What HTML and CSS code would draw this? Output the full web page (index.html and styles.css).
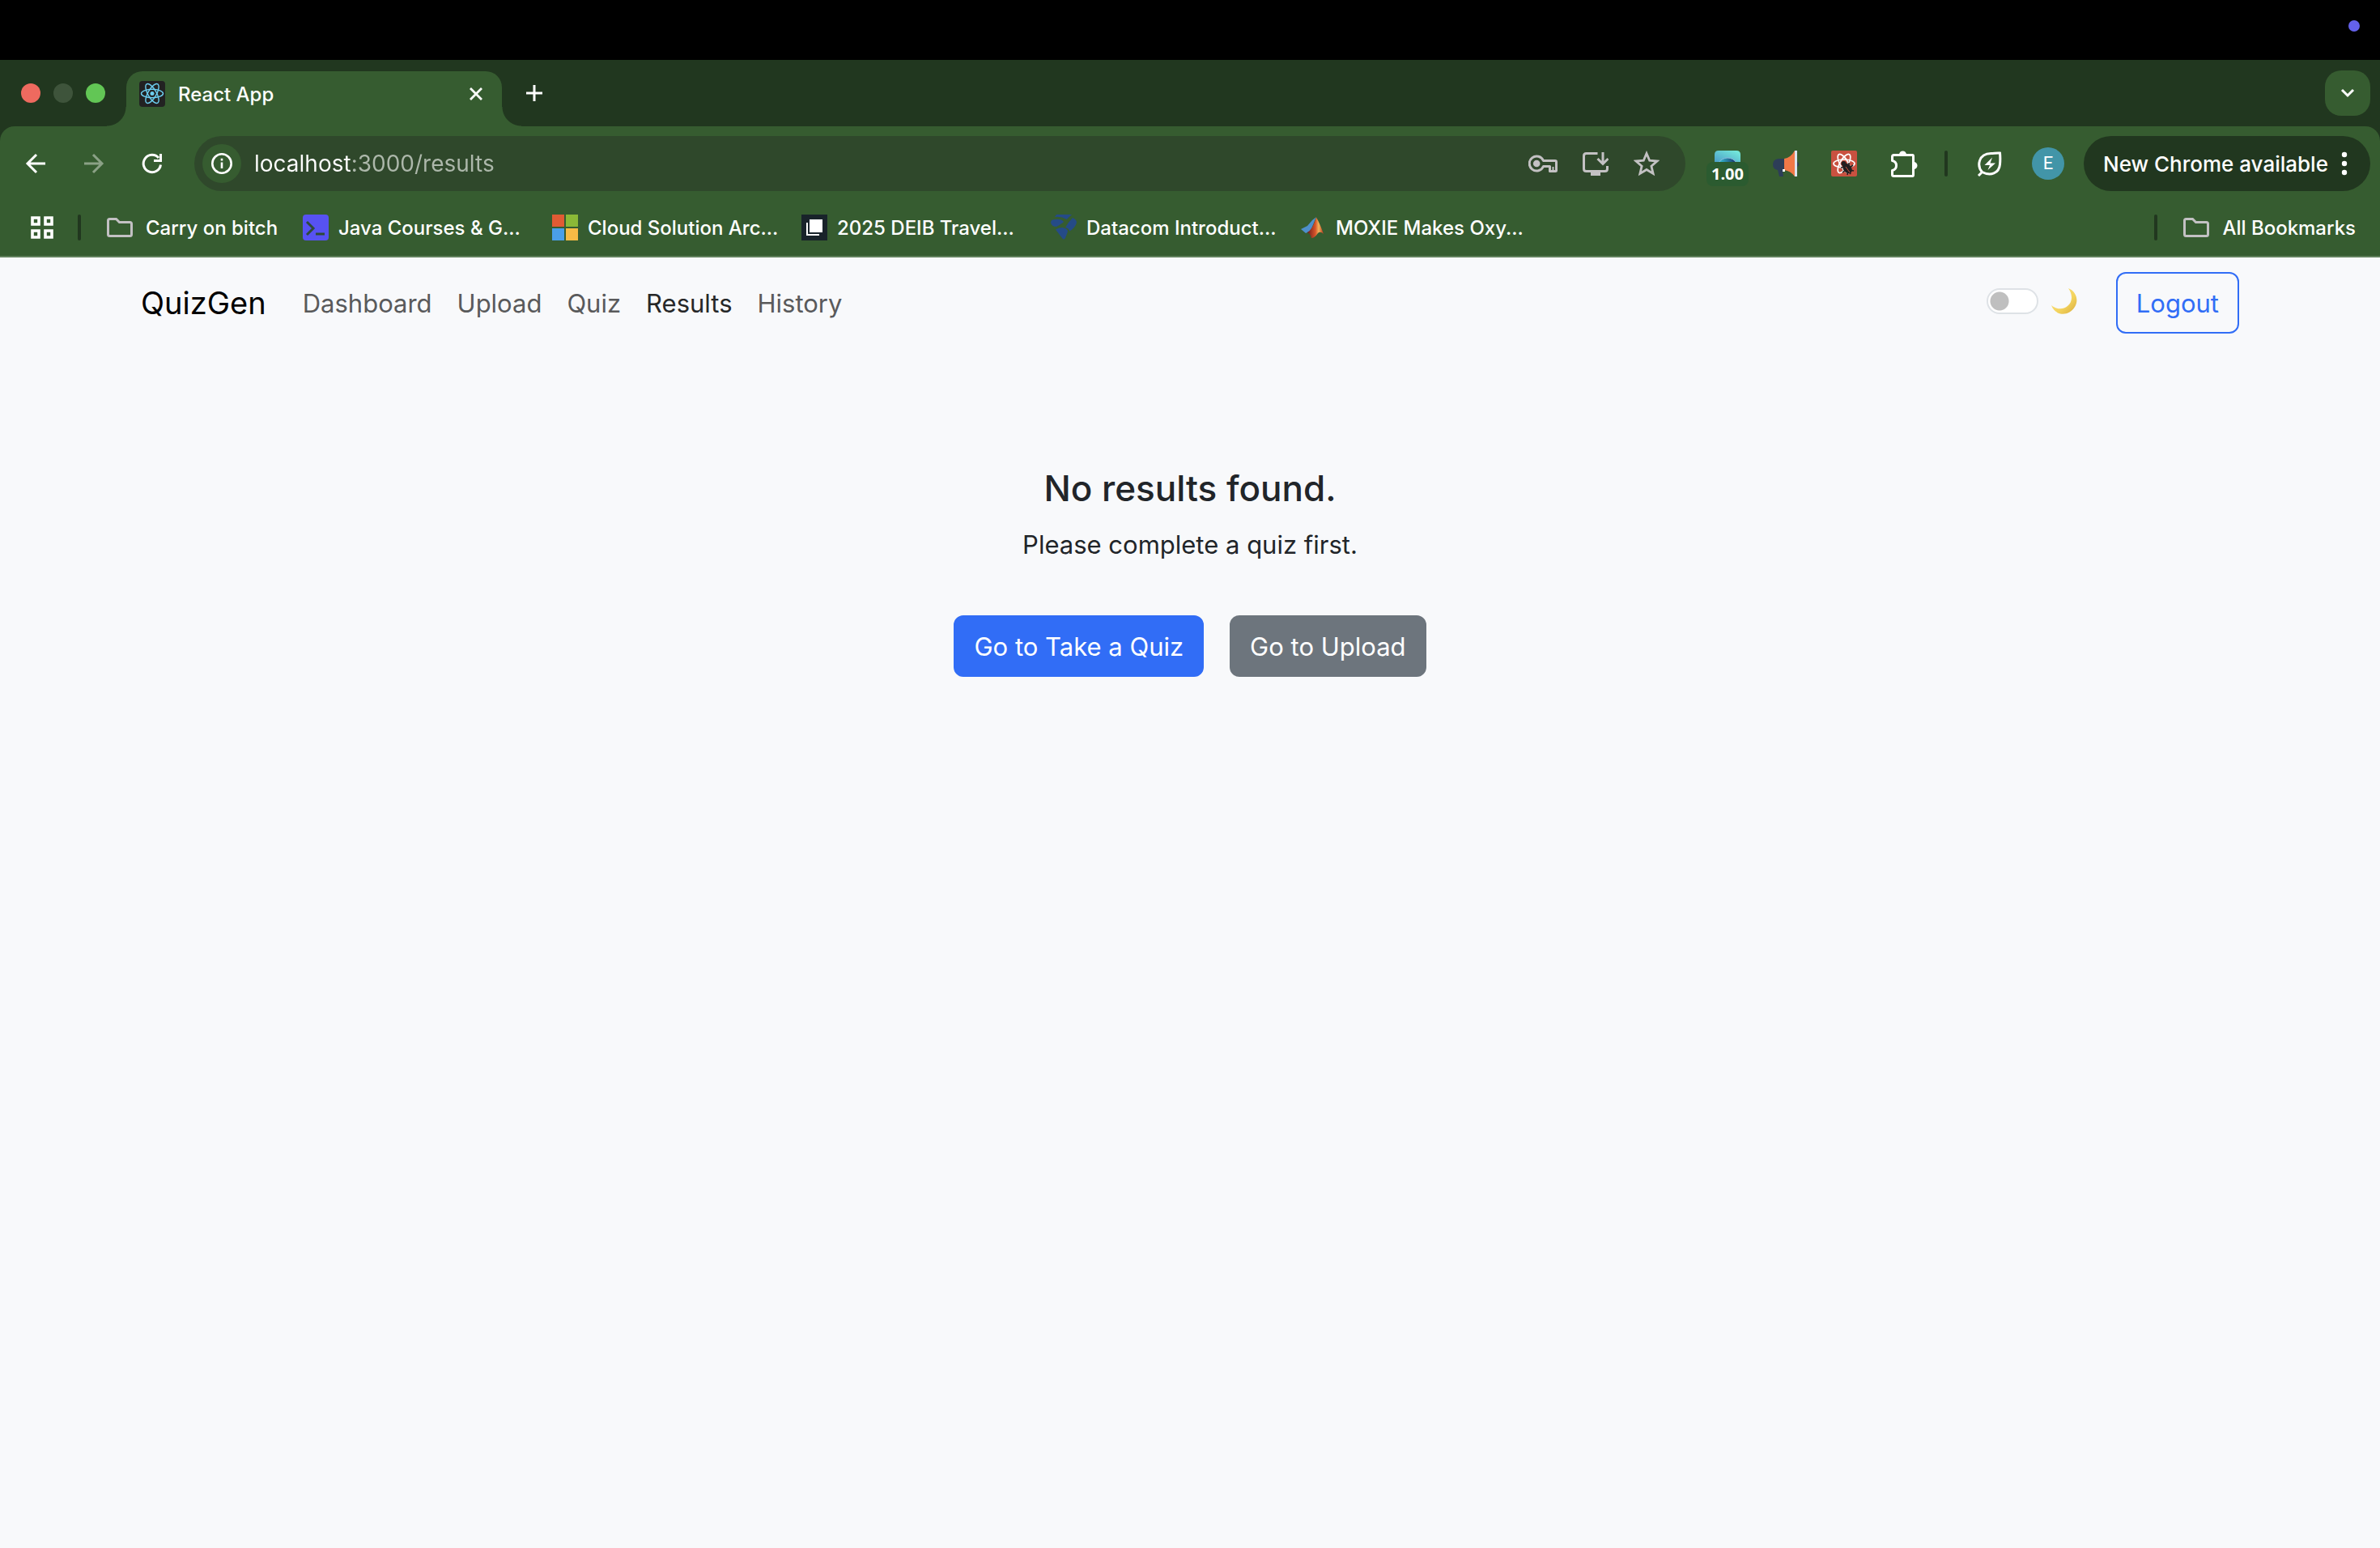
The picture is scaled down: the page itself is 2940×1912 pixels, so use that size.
FILE: index.html
```html
<!DOCTYPE html>
<html lang="en">
<head>
<meta charset="utf-8">
<title>React App</title>
<link rel="stylesheet" href="styles.css">
</head>
<body>
<div class="menubar"><span class="menubar-dot"></span></div>

<header class="browser">
  <div class="tabstrip">
    <div class="lights">
      <button class="light red" aria-label="Close window"></button>
      <button class="light dim" aria-label="Minimize window"></button>
      <button class="light green" aria-label="Zoom window"></button>
    </div>
    <div class="tab">
      <svg class="icon32" viewBox="0 0 32 32"><rect width="32" height="32" rx="4" fill="#222"/><g fill="none" stroke="#6dcff0" stroke-width="1.4"><ellipse cx="16" cy="15.500" rx="13.500" ry="5.200"/><ellipse cx="16" cy="15.500" rx="13.500" ry="5.200" transform="rotate(60 16 15.500)"/><ellipse cx="16" cy="15.500" rx="13.500" ry="5.200" transform="rotate(120 16 15.500)"/></g><circle cx="16" cy="15.500" r="2.500" fill="#6dcff0"/></svg>
      <span class="tab-title">React App</span>
      <button class="tab-close" aria-label="Close tab"><svg width="20" height="20" viewBox="0 0 20 20"><path d="M3 3l14 14M17 3L3 17" stroke="#fff" stroke-width="2.800" fill="none"/></svg></button>
    </div>
    <button class="new-tab" aria-label="New tab"><svg width="24" height="24" viewBox="0 0 24 24"><path d="M12 2v20M2 12h20" stroke="#fff" stroke-width="3" fill="none"/></svg></button>
    <button class="tab-search" aria-label="Search tabs"><svg width="20" height="14" viewBox="0 0 20 14"><path d="M3 3l7 7 7-7" stroke="#fff" stroke-width="3" fill="none"/></svg></button>
  </div>

  <div class="toolbar">
    <div class="history">
      <button aria-label="Back"><svg class="icon32" viewBox="0 0 32 32"><path d="M28 16H6M17 5L6 16l11 11" stroke="#fff" stroke-width="3" fill="none"/></svg></button>
      <button aria-label="Forward"><svg class="icon32" viewBox="0 0 32 32"><path d="M4 16h22M15 5l11 11-11 11" stroke="#8ba186" stroke-width="3" fill="none"/></svg></button>
      <button aria-label="Reload"><svg class="icon32" viewBox="0 0 32 32"><path d="M26.500 17.500A10.700 10.700 0 1 1 24 9" stroke="#fff" stroke-width="3" fill="none"/><path d="M28 4v10H18v-3h7V4z" fill="#fff"/></svg></button>
    </div>
    <div class="omnibox">
      <button class="site-info" aria-label="View site information"><svg width="28" height="28" viewBox="0 0 28 28"><circle cx="14" cy="14" r="11.700" stroke="#fff" stroke-width="2.600" fill="none"/><path d="M14 12.500v7.500M14 7.800v2.800" stroke="#fff" stroke-width="2.600"/></svg></button>
      <input class="url" type="text" value="localhost:3000/results" aria-label="Address and search bar">
      <button aria-label="Passwords"><svg width="36" height="24" viewBox="0 0 36 24"><g fill="none" stroke="#c3c1c3" stroke-width="3" stroke-linejoin="round"><path d="M18.500 8.500H33Q34.500 8.500 34.500 10V21Q34.500 21.500 33.500 21.500H26.500V15.500H18.500A9 9 0 1 1 18.500 8.500Z"/><path d="M30.500 21v-5" stroke-width="2"/></g><circle cx="10.200" cy="12" r="4.300" fill="#c3c1c3"/></svg></button>
      <button aria-label="Install app"><svg class="icon32" viewBox="0 0 32 32"><path d="M18.500 3.500H4.500Q1.500 3.500 1.500 6.500V22.500Q1.500 25.500 4.500 25.500H27.500Q30.500 25.500 30.500 22.500V19" fill="none" stroke="#c3c1c3" stroke-width="3"/><path d="M10 25h12v6H10z" fill="#c3c1c3"/><path d="M25 2v14M18.500 10l6.500 6.500L31.500 10" fill="none" stroke="#c3c1c3" stroke-width="3"/></svg></button>
      <button aria-label="Bookmark this tab"><svg class="icon32" viewBox="0 0 32 32"><path d="M16 3.500l3.700 8.700 9.300.8-7.100 6.200 2.200 9.200L16 23.500l-8.100 4.900 2.200-9.200L3 13l9.300-.8z" fill="none" stroke="#c3c1c3" stroke-width="2.800"/></svg></button>
    </div>
    <div class="extensions">
      <button class="speed" aria-label="Video speed"><svg class="icon32" viewBox="0 0 32 32"><defs><linearGradient id="sky" x1="0" y1="1" x2="1" y2="0"><stop offset="0" stop-color="#4a9cc8"/><stop offset="1" stop-color="#78efdc"/></linearGradient><linearGradient id="eye"><stop offset="0" stop-color="#38c3d8"/><stop offset="1" stop-color="#152f68"/></linearGradient></defs><path d="M0 15V5Q0 0 5 0H27Q32 0 32 5V15z" fill="url(#sky)"/><path d="M5 15Q9 9 16 9T27 15z" fill="url(#eye)" stroke="#8eb9dd"/></svg><span class="badge">1.00</span></button>
      <button aria-label="Announcements"><svg class="icon32" viewBox="0 0 32 32"><path d="M14 10H7Q0 11 0 17T6 24L8 32h5l-1-7h3z" fill="#2d3d58"/><path d="M29 14q3 0 3 3t-3 3z" fill="#2d3d58"/><path d="M14 10Q22 9 27 0V32Q22 25 14 24z" fill="#f17847"/><path d="M27 0h3v32h-3z" fill="#d9e3ef"/><path d="M12 23h3v3h-3z" fill="#fff"/></svg></button>
      <button aria-label="React Developer Tools"><svg class="icon32" viewBox="0 0 32 32"><rect width="32" height="32" rx="2" fill="#c95140"/><g fill="none" stroke="#fff" stroke-width="1.700"><ellipse cx="16" cy="16" rx="13" ry="5"/><ellipse cx="16" cy="16" rx="13" ry="5" transform="rotate(60 16 16)"/><ellipse cx="16" cy="16" rx="13" ry="5" transform="rotate(120 16 16)"/></g><ellipse cx="20" cy="22" rx="5" ry="7" transform="rotate(-38 20 22)" fill="#231f20"/><circle cx="15.500" cy="16" r="3" fill="#231f20"/><path d="M12 21l5-1M14 27l5-4M20 30l1-5M22 15v5M27 18l-4 3M28 25l-5-1M18 18l6 11" stroke="#231f20" stroke-width="1.600"/><path d="M18 20l5 7" stroke="#c95140"/></svg></button>
      <button aria-label="Extensions"><svg width="36" height="36" viewBox="0 0 36 36"><path d="M5.500 7.500H28.500Q29.500 7.500 29.500 9V32Q29.500 33.500 28.500 33.500H5.500Q3.500 33.500 3.500 32V26.500Q8.500 25.500 8.500 20.500T3.500 14.500V9.500Q3.500 7.500 5.500 7.500Z" fill="none" stroke="#fff" stroke-width="3" stroke-linejoin="round"/><path d="M12 7a4.500 4.500 0 0 1 9 0zM30 16a4.500 4.500 0 0 1 0 9z" fill="#fff"/></svg></button>
    </div>
    <span class="divider"></span>
    <button class="saver" aria-label="Energy saver"><svg class="icon32" viewBox="0 0 32 32"><path d="M6.500 26.500C0 19 1.500 4 17.500 3.500 21 3.500 25 2.500 28.500 3 29 8 29 12 28.500 17 27.500 28 17 32 6.500 26.500L2 31" fill="none" stroke="#fff" stroke-width="3"/><path d="M19 8.500L9.500 18h6.500l-2.500 6L23 15.500h-6.500z" fill="#fff"/></svg></button>
    <button class="avatar" aria-label="Profile E">E</button>
    <button class="update">New Chrome available<svg width="8" height="32" viewBox="0 0 8 32"><g fill="#fff"><circle cx="4" cy="5" r="3.200"/><circle cx="4" cy="16" r="3.200"/><circle cx="4" cy="27" r="3.200"/></g></svg></button>
  </div>

  <nav class="bookmarks" aria-label="Bookmarks">
    <button class="apps" aria-label="Apps"><svg width="28" height="28" viewBox="0 0 28 28"><path d="M2 2h8v8H2zM18 2h8v8h-8zM2 18h8v8H2zM18 18h8v8h-8z" fill="none" stroke="#fff" stroke-width="3.600"/></svg></button>
    <span class="divider"></span>
    <button class="bookmark folder"><svg class="icon32" viewBox="0 0 32 32"><path d="M3.500 5.500H11.500L15.500 9.500H28.500Q30.500 9.500 30.500 11.500V24.500Q30.500 26.500 28.500 26.500H3.500Q1.500 26.500 1.500 24.500V7.500Q1.500 5.500 3.500 5.500Z" fill="none" stroke="#c3c1c3" stroke-width="3"/></svg><span>Carry on bitch</span></button>
    <a class="bookmark" href="#"><svg class="icon32" viewBox="0 0 32 32"><rect width="32" height="32" rx="4" fill="#5752f2"/><path d="M5 9l8 8-8 8M16 24h11" fill="none" stroke="#2f4a38" stroke-width="3"/></svg><span>Java Courses &amp; G...</span></a>
    <a class="bookmark" href="#"><svg class="icon32" viewBox="0 0 32 32"><path d="M0 0h15v15H0z" fill="#e15b34"/><path d="M17 0h15v15H17z" fill="#8bb937"/><path d="M0 17h15v15H0z" fill="#4a9fe9"/><path d="M17 17h15v15H17z" fill="#f6bb45"/></svg><span>Cloud Solution Arc...</span></a>
    <a class="bookmark" href="#"><svg class="icon32" viewBox="0 0 32 32"><path d="M0 0h32v32H0z" fill="#19232a"/><path d="M10 6h16v16H10z" fill="#fff"/><path d="M7 10v15h15" fill="none" stroke="#fff" stroke-width="2"/></svg><span>2025 DEIB Travel...</span></a>
    <a class="bookmark" href="#"><svg class="icon32" viewBox="0 0 32 32"><g fill="#254b87"><path d="M7 0H26L19.500 6Q13 2 5 3Z"/><path d="M0 10Q0 6 5 6Q13 5 16 9Q14 11 7 15Q1 15 0 10Z"/><path d="M27 4Q32 6 32 10Q30 17 23 20.500Q23 17 18 16Q22 9 27 4Z"/><path d="M6 18.500Q9 16 14 16Q21 17 21 21L18 29Q16 32 14 29Z"/></g></svg><span>Datacom Introduct...</span></a>
    <a class="bookmark" href="#"><svg class="icon32" viewBox="0 0 32 32"><defs><linearGradient id="peak"><stop offset="0" stop-color="#6a1c1c"/><stop offset=".5" stop-color="#d8542a"/><stop offset=".7" stop-color="#f3b45c"/><stop offset="1" stop-color="#b52f1c"/></linearGradient></defs><path d="M1 18l8-4 6-7 5-4-7 17-6 3z" fill="#4e8fcb"/><path d="M20 3.500Q24 10 29 24Q25 20 22 23Q18 29 14 29Q13 24 9 22Q15 19 20 3.500z" fill="url(#peak)"/></svg><span>MOXIE Makes Oxy...</span></a>
    <span class="divider push"></span>
    <button class="bookmark all"><svg class="icon32" viewBox="0 0 32 32"><path d="M3.500 5.500H11.500L15.500 9.500H28.500Q30.500 9.500 30.500 11.500V24.500Q30.500 26.500 28.500 26.500H3.500Q1.500 26.500 1.500 24.500V7.500Q1.500 5.500 3.500 5.500Z" fill="none" stroke="#c3c1c3" stroke-width="3"/></svg><span>All Bookmarks</span></button>
  </nav>
</header>

<nav class="navbar" aria-label="Main">
  <a class="brand" href="#">QuizGen</a>
  <div class="links">
    <a href="#">Dashboard</a>
    <a href="#">Upload</a>
    <a href="#">Quiz</a>
    <a class="active" href="#" aria-current="page">Results</a>
    <a href="#">History</a>
  </div>
  <label class="theme">
    <input class="switch" type="checkbox" role="switch" aria-label="Dark mode">
    <svg class="icon32" viewBox="0 0 32 32"><defs><linearGradient id="moon" x1="0" y1="0" x2="1" y2="1"><stop offset="0" stop-color="#fbe68c"/><stop offset=".6" stop-color="#f3d35c"/><stop offset="1" stop-color="#d9ac3e"/></linearGradient></defs><path d="M21 0C31 4 34 15 29 23 22 35 5 35 0 21 6 26 14 27 20 22 27 16 26 7 21 0Z" fill="url(#moon)"/></svg>
  </label>
  <button class="btn outline">Logout</button>
</nav>

<main class="empty">
  <h1>No results found.</h1>
  <p>Please complete a quiz first.</p>
  <div class="actions">
    <button class="btn primary">Go to Take a Quiz</button>
    <button class="btn secondary">Go to Upload</button>
  </div>
</main>
</body>
</html>
```
FILE: styles.css
```css
* { box-sizing: border-box; }
body {
  margin: 0;
  min-height: 100vh;
  background: #f8f9fb;
  color: #212529;
  font-family: Inter, "Liberation Sans", sans-serif;
  font-size: 31px;
}
button, input { font: inherit; color: inherit; }
button { border: 0; padding: 0; background: none; }
a { color: inherit; text-decoration: none; }
svg { display: block; flex: none; }
.icon32 { width: 32px; height: 32px; }

.menubar {
  display: flex;
  justify-content: flex-end;
  height: 74px;
  padding: 25px 25px 0 0;
  background: #000;
}
.menubar-dot { width: 14px; height: 14px; border-radius: 50%; background: #6461ea; }

.browser {
  background: #21371f;
  color: #fff;
  font-size: 24px;
  font-weight: 450;
}
.tabstrip {
  display: flex;
  align-items: center;
  height: 82px;
  padding: 0 12px 0 26px;
}
.lights { display: flex; gap: 16px; margin-right: 26px; }
.light { width: 24px; height: 24px; border-radius: 50%; }
.red { background: #ee6a5f; }
.dim { background: #3e543b; }
.green { background: #62c655; }
.tab {
  position: relative;
  display: flex;
  align-items: center;
  align-self: flex-end;
  width: 464px;
  height: 68px;
  padding: 0 22px 12px 16px;
  border-radius: 20px 20px 0 0;
  background: #365c30;
}
.tab::before, .tab::after {
  content: "";
  position: absolute;
  bottom: 0;
  width: 24px;
  height: 24px;
}
.tab::before { right: 100%; background: radial-gradient(circle at 0 0, #21371f 23px, #365c30 24px); }
.tab::after { left: 100%; background: radial-gradient(circle at 100% 0, #21371f 23px, #365c30 24px); }
.tab-title { flex: 1; padding-left: 16px; }
.new-tab { margin-left: 28px; }
.tab-search {
  display: grid;
  place-items: center;
  width: 56px;
  height: 56px;
  margin-left: auto;
  border-radius: 20px;
  background: #365c30;
}

.toolbar {
  display: flex;
  align-items: center;
  height: 92px;
  padding: 0 12px 0 28px;
  border-radius: 18px 18px 0 0;
  background: #365c30;
}
.history { display: flex; gap: 40px; margin-right: 36px; }
.omnibox {
  display: flex;
  flex: 1;
  align-items: center;
  gap: 31px;
  height: 68px;
  padding: 0 32px 0 10px;
  border-radius: 34px;
  background: #2f482b;
}
.site-info {
  display: grid;
  place-items: center;
  width: 48px;
  height: 48px;
  border-radius: 50%;
  background: #365c30;
}
.url {
  flex: 1;
  min-width: 0;
  margin-left: -15px;
  padding: 0;
  border: 0;
  outline: 0;
  background: linear-gradient(90deg, #fff 121px, #adb8ab 121px);
  background-clip: text;
  color: transparent;
  font-size: 28px;
  font-weight: 400;
}
.extensions { display: flex; align-items: center; gap: 40px; margin: 0 32px 0 36px; }
.speed { position: relative; }
.badge {
  position: absolute;
  top: 14px;
  left: -10px;
  width: 52px;
  height: 30px;
  border-radius: 8px;
  background: #2b5b30;
  font: 700 20px/30px "Open Sans", sans-serif;
}
.divider { width: 4px; height: 32px; border-radius: 2px; background: #21371f; }
.saver { margin: 0 36px; }
.avatar {
  width: 40px;
  height: 40px;
  border-radius: 50%;
  background: #4295a8;
  font: 400 22px/40px Roboto, sans-serif;
}
.update {
  display: flex;
  align-items: center;
  justify-content: space-between;
  width: 354px;
  height: 68px;
  margin-left: 24px;
  padding: 0 28px 0 24px;
  border-radius: 34px;
  background: #21371f;
  font-size: 26px;
  white-space: nowrap;
}

.bookmarks {
  display: flex;
  align-items: center;
  height: 70px;
  padding: 0 30px 2px 38px;
  border-bottom: 2px solid #60805b;
  background: #365c30;
}
.apps { margin-right: 30px; }
.bookmark {
  display: flex;
  flex: none;
  align-items: center;
  gap: 12px;
  width: 308px;
  white-space: nowrap;
}
.folder { width: 242px; margin-left: 32px; gap: 16px; }
.all { width: auto; margin-left: 32px; gap: 16px; }
.push { margin-left: auto; }

.navbar {
  display: flex;
  align-items: center;
  height: 112px;
  padding: 0 174px;
}
.brand { margin-right: 30px; color: #000; font-size: 38px; }
.links { display: flex; flex: 1; color: #595a5b; }
.links a { padding: 16px 16px 16px 15px; }
.links .active { color: #262728; }
.theme { display: flex; gap: 16px; margin-right: 48px; padding-bottom: 4px; }
.switch {
  appearance: none;
  width: 64px;
  height: 32px;
  margin: 0;
  border: 2px solid #dee2e6;
  border-radius: 16px;
  background: radial-gradient(circle at 14px 14px, #bfbfbf 11px, #fff 12px);
}
.btn {
  height: 76px;
  padding: 0 23px;
  border: 2px solid;
  border-radius: 12px;
}
.outline { border-color: #316df6; color: #316df6; }
.primary { border-color: #316df6; background: #316df6; color: #fff; }
.secondary { border-color: #6d757d; background: #6d757d; color: #fff; }

.empty { padding: 144px 24px; text-align: center; }
h1 { margin: 0 0 16px; font-size: 44px; font-weight: 500; line-height: 58px; }
p { margin: 0; line-height: 50px; }
.actions { display: flex; justify-content: center; gap: 32px; margin-top: 62px; }
```
